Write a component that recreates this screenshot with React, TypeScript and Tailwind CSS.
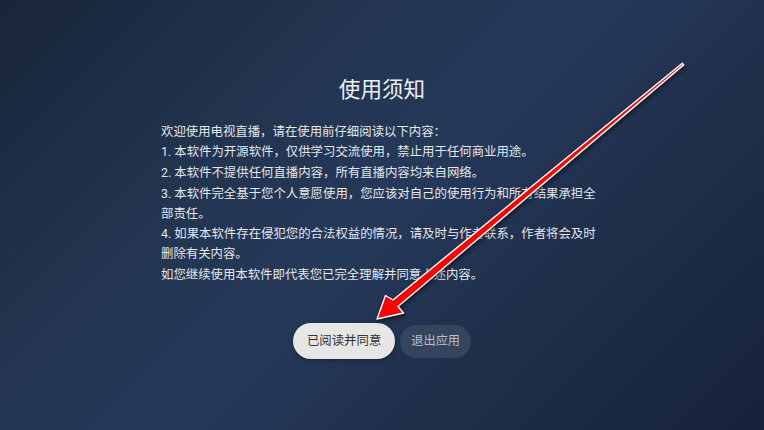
import React from "react";

const lines = [
  "欢迎使用电视直播，请在使用前仔细阅读以下内容：",
  "1. 本软件为开源软件，仅供学习交流使用，禁止用于任何商业用途。",
  "2. 本软件不提供任何直播内容，所有直播内容均来自网络。",
  "3. 本软件完全基于您个人意愿使用，您应该对自己的使用行为和所有结果承担全部责任。",
  "4. 如果本软件存在侵犯您的合法权益的情况，请及时与作者联系，作者将会及时删除有关内容。",
  "如您继续使用本软件即代表您已完全理解并同意上述内容。",
];

function Arrow() {
  return (
    <svg
      className="pointer-events-none absolute left-0 top-0 h-[430px] w-[764px] drop-shadow-[1px_2px_2px_rgba(0,0,0,0.55)]"
      viewBox="0 0 764 430"
    >
      <polygon
        points="377,319 385.5,295.5 393,300 682.3,63.3 683.7,64.9 398,306.5 403.5,313"
        fill="#ff0000"
        stroke="#ffffff"
        strokeWidth="1.4"
        strokeLinejoin="round"
      />
    </svg>
  );
}

export default function App() {
  return (
    <div
      className="relative flex h-screen w-full flex-col items-center justify-center overflow-hidden bg-[linear-gradient(135deg,#192539_0%,#22344f_30%,#25395a_50%,#1f2f4a_70%,#17223a_100%)]"
      style={{ fontFamily: 'Roboto, "Noto Sans CJK SC", sans-serif' }}
    >
      <div className="flex flex-col items-center pt-[5px]">
        <h1 className="text-[21.6px] leading-[28px] text-[#eef0f3]">使用须知</h1>

        <div className="mt-[18px] w-[442px] pr-[2px] text-[12.4px] leading-[19.5px] text-[#e4e7ec]">
          {lines.map((t, i) => (
            <p key={i} className="mb-[1.3px]">
              {t}
            </p>
          ))}
        </div>

        <div className="mt-[38px] flex items-center gap-[5px]">
          <button
            type="button"
            className="h-[36px] rounded-full bg-[#e6e6e6] px-[14px] text-[12.4px] text-[#333333] shadow-[0_1px_4px_rgba(0,0,0,0.35)]"
          >
            已阅读并同意
          </button>
          <button
            type="button"
            className="h-[33px] rounded-full bg-[#35455d] px-[11px] text-[12.2px] text-[#b6bfcb]"
          >
            退出应用
          </button>
        </div>
      </div>

      <Arrow />
    </div>
  );
}
